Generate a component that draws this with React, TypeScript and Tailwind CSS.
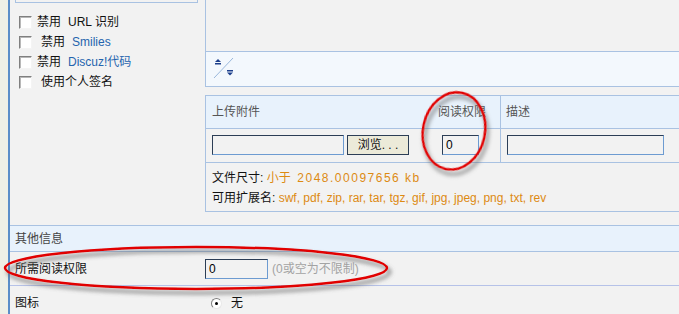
import React from 'react';

function CheckBox() {
  return (
    <span className="inline-block w-[13px] h-[13px] shrink-0 bg-white border border-t-[#7f7f7f] border-l-[#7f7f7f] border-b-[#f4f4f4] border-r-[#f4f4f4] shadow-[inset_1px_1px_0_#b8b8b8]" />
  );
}

function TextBox({ className, value }: { className: string; value?: string }) {
  return (
    <div
      className={`h-[20px] border border-t-[#2c3e56] border-l-[#2c3e56] border-r-[#6d9bd1] border-b-[#6d9bd1] px-[3px] leading-[18px] text-[#000] ${className}`}
    >
      {value}
    </div>
  );
}

function ResizeIcon() {
  return (
    <svg width="22" height="22" viewBox="0 0 22 22">
      <line x1="1" y1="21" x2="20" y2="1" stroke="#9ab8dc" strokeWidth="1" />
      <path d="M5 2 L8 5 L2 5 Z" fill="#1c3f8c" />
      <rect x="2" y="6" width="6" height="1.5" fill="#1c3f8c" />
      <rect x="14" y="13" width="6" height="1.5" fill="#1c3f8c" />
      <path d="M14 15.5 L20 15.5 L17 18.5 Z" fill="#1c3f8c" />
    </svg>
  );
}

function Annotations() {
  return (
    <svg className="absolute inset-0 pointer-events-none" width="679" height="314">
      <defs>
        <filter id="shade" x="-20%" y="-40%" width="140%" height="180%">
          <feDropShadow dx="3" dy="4" stdDeviation="2" floodColor="#5e5e5e" floodOpacity="0.85" />
        </filter>
      </defs>
      <ellipse
        cx="454"
        cy="131"
        rx="31"
        ry="39"
        transform="rotate(12 454 131)"
        fill="none"
        stroke="#e10000"
        strokeWidth="2.5"
        filter="url(#shade)"
      />
      <ellipse
        cx="196"
        cy="268"
        rx="191"
        ry="21"
        fill="none"
        stroke="#e10000"
        strokeWidth="2.5"
        filter="url(#shade)"
      />
    </svg>
  );
}

export default function App() {
  return (
    <div className="relative w-[679px] h-[314px] overflow-hidden flex bg-[#f2f2f2] text-[12px] text-[#111] font-['Liberation_Sans','Noto_Sans_CJK_SC',sans-serif]">
      {/* page margin + blue rail */}
      <div className="w-[8px] shrink-0 bg-[#eef0e7]" />
      <div className="w-[2px] shrink-0 bg-[#5a8ec9]" />

      <div className="flex-1 flex flex-col">
        {/* post body area */}
        <div className="flex h-[226px] border-b border-[#a9c2e2]">
          {/* options column */}
          <div className="w-[195px] shrink-0">
            <div className="ml-[5px] w-[183px] h-[3px] border-l border-r border-b border-[#a9c2e2]" />
            <div className="pt-[9px] pl-[9px]">
              <label className="flex items-center h-[20px]">
                <CheckBox />
                <span className="ml-[5px]">禁用</span>
                <span className="ml-[7px]">URL 识别</span>
              </label>
              <label className="flex items-center h-[20px]">
                <CheckBox />
                <span className="ml-[9px]">禁用</span>
                <span className="ml-[7px] text-[#2464ae]">Smilies</span>
              </label>
              <label className="flex items-center h-[20px]">
                <CheckBox />
                <span className="ml-[5px]">禁用</span>
                <span className="ml-[7px] text-[#2464ae]">Discuz!代码</span>
              </label>
              <label className="flex items-center h-[20px]">
                <CheckBox />
                <span className="ml-[9px]">使用个人签名</span>
              </label>
            </div>
          </div>

          {/* editor + attachments */}
          <div className="flex-1 flex flex-col">
            <div className="border-l border-[#a9c2e2]">
              <div className="h-[52px] border-b border-[#a9c2e2] bg-[#f2f2f2]" />
              <div className="h-[35px] border-b border-[#a9c2e2] bg-[#f3f8fd] pl-[7px] pt-[5px]">
                <ResizeIcon />
              </div>
            </div>

            <div className="mt-[8px] border-t border-l border-b border-[#a9c2e2]">
              <div className="grid grid-cols-[226px_69px_1fr] h-[33px] bg-[#e8f2fc] border-b border-[#a9c2e2] text-[#555]">
                <div className="pl-[6px] flex items-center">上传附件</div>
                <div className="pl-[6px] flex items-center border-r border-[#a9c2e2]">阅读权限</div>
                <div className="pl-[5px] flex items-center">描述</div>
              </div>
              <div className="grid grid-cols-[226px_69px_1fr] h-[34px] border-b border-[#a9c2e2]">
                <div className="pl-[6px] pt-[6px] flex gap-[3px]">
                  <TextBox className="w-[132px] bg-[#f2f2f2]" />
                  <button className="w-[62px] h-[20px] bg-[#ecead9] border border-[#2c3e56] text-[#111] leading-[18px]">
                    浏览. . .
                  </button>
                </div>
                <div className="pl-[10px] pt-[6px] border-r border-[#a9c2e2]">
                  <TextBox className="w-[37px] bg-[#f2f2f2]" value="0" />
                </div>
                <div className="pl-[6px] pt-[6px]">
                  <TextBox className="w-[157px] bg-[#f2f2f2]" />
                </div>
              </div>
              <div className="h-[48px] pl-[6px] pt-[5px]">
                <div className="h-[20px] leading-[20px]">
                  文件尺寸: <span className="text-[#dd8a12]">小于&nbsp; <span className="tracking-[1.5px]">2048.00097656 kb</span></span>
                </div>
                <div className="h-[20px] leading-[20px]">
                  可用扩展名: <span className="text-[#dd8a12]">swf, pdf, zip, rar, tar, tgz, gif, jpg, jpeg, png, txt, rev</span>
                </div>
              </div>
            </div>
          </div>
        </div>

        {/* other info */}
        <div className="h-[26px] bg-[#e8f2fc] border-b border-[#a9c2e2] pl-[5px] flex items-center text-[#444]">
          其他信息
        </div>
        <div className="flex h-[34px] border-b border-[#b6c2e8] items-center">
          <div className="w-[195px] shrink-0 pl-[5px]">所需阅读权限</div>
          <TextBox className="w-[63px] bg-[#f2f2f2]" value="0" />
          <span className="ml-[4px] text-[#a3a3a3]">(0或空为不限制)</span>
        </div>
        <div className="flex pt-[8px]">
          <div className="w-[195px] shrink-0 pl-[5px]">图标</div>
          <label className="flex items-center ml-[6px]">
            <span className="w-[11px] h-[11px] rounded-full bg-white border border-t-[#808080] border-l-[#808080] border-b-[#e8e8e8] border-r-[#e8e8e8] flex items-center justify-center">
              <span className="w-[3px] h-[3px] rounded-full bg-black" />
            </span>
            <span className="ml-[9px]">无</span>
          </label>
        </div>
      </div>

      <Annotations />
    </div>
  );
}
